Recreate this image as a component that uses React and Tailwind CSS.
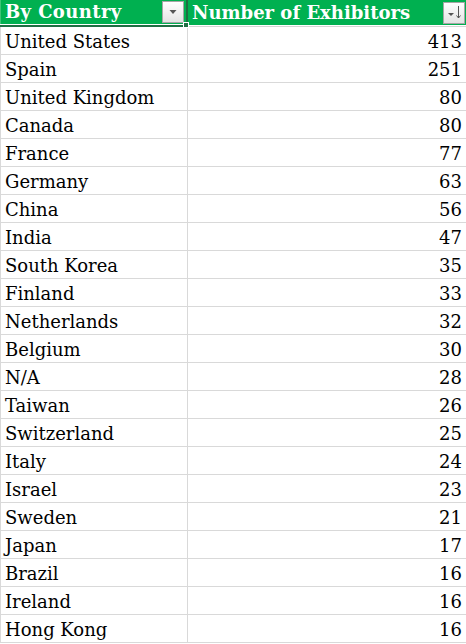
import React from "react";

const rows = [
  ["United States", 413],
  ["Spain", 251],
  ["United Kingdom", 80],
  ["Canada", 80],
  ["France", 77],
  ["Germany", 63],
  ["China", 56],
  ["India", 47],
  ["South Korea", 35],
  ["Finland", 33],
  ["Netherlands", 32],
  ["Belgium", 30],
  ["N/A", 28],
  ["Taiwan", 26],
  ["Switzerland", 25],
  ["Italy", 24],
  ["Israel", 23],
  ["Sweden", 21],
  ["Japan", 17],
  ["Brazil", 16],
  ["Ireland", 16],
  ["Hong Kong", 16],
];

const FilterButton = ({ sorted }) => (
  <div className="w-[22px] h-[22px] border border-[#a6a6a6] bg-gradient-to-b from-white to-[#e4e4e4] flex items-center justify-center shrink-0">
    {sorted ? (
      <svg width="18" height="16" viewBox="0 0 18 16">
        <path d="M3 8 h6 l-3 3 z" fill="#555" />
        <path d="M13.5 1 v12" stroke="#555" strokeWidth="1" />
        <path d="M11.5 10.5 l2 2.5 l2 -2.5" stroke="#555" strokeWidth="1" fill="none" />
      </svg>
    ) : (
      <svg width="10" height="6" viewBox="0 0 10 6">
        <path d="M1.5 1 h7 l-3.5 4 z" fill="#555" />
      </svg>
    )}
  </div>
);

export default function App() {
  return (
    <div
      className="w-[466px] h-[644px] overflow-hidden bg-white text-black"
      style={{ fontFamily: '"DejaVu Serif", "Liberation Serif", serif' }}
    >
      {/* header */}
      <div className="flex h-[27px]">
        <div className="relative w-[188px] shrink-0 flex flex-col">
          <div className="h-[24px] bg-[#00b050] border-l border-[#3cc476] border-r-2 border-r-[#1e6f43] flex items-center pl-[4px] pr-[2px]">
            <span className="flex-1 text-white font-bold text-[18px] leading-[24px] tracking-[0.4px]">By Country</span>
            <FilterButton />
          </div>
          <div className="h-[1px] bg-white" />
          <div className="h-[2px] bg-[#1e6f43]" />
          <div className="absolute left-[183px] top-[22px] w-[6px] h-[6px] bg-[#1e6f43] border border-white" />
        </div>
        <div className="flex-1 flex flex-col">
          <div className="h-[25px] bg-[#00b050] flex items-center pl-[4px] pr-[1px]">
            <span className="flex-1 text-white font-bold text-[18px] leading-[24px]">Number of Exhibitors</span>
            <FilterButton sorted />
          </div>
          <div className="h-[1px] bg-white" />
          <div className="h-[1px] bg-[#d4d4d4]" />
        </div>
      </div>

      {/* rows */}
      {rows.map(([country, count]) => (
        <div key={country} className="flex h-[28px] border-b border-[#d9d9d9]">
          <div className="w-[188px] shrink-0 border-l border-r border-[#d9d9d9] pl-[4px] pt-[1px] text-[18px] leading-[27px]">
            {country}
          </div>
          <div className="flex-1 text-right pr-[4px] pt-[1px] text-[18px] leading-[27px]">
            {count}
          </div>
        </div>
      ))}
    </div>
  );
}
